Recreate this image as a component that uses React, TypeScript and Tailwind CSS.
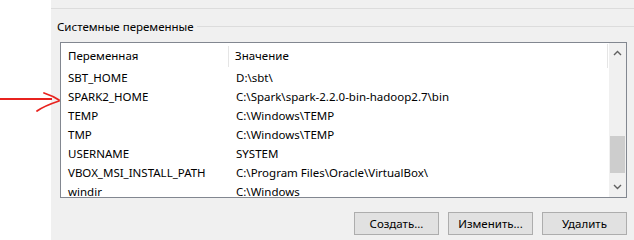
import React from "react";

const rows: [string, string][] = [
    ["SBT_HOME", "D:\\sbt\\"],
    ["SPARK2_HOME", "C:\\Spark\\spark-2.2.0-bin-hadoop2.7\\bin"],
    ["TEMP", "C:\\Windows\\TEMP"],
    ["TMP", "C:\\Windows\\TEMP"],
    ["USERNAME", "SYSTEM"],
    ["VBOX_MSI_INSTALL_PATH", "C:\\Program Files\\Oracle\\VirtualBox\\"],
    ["windir", "C:\\Windows"],
];

const font = { fontFamily: '"Noto Sans", "Open Sans", sans-serif' };

const Button = ({ label }: { label: string }) => (
    <button className="w-[85px] h-[23px] bg-[#e1e1e1] border border-[#adadad] text-[11.5px] text-black leading-none">
        {label}
    </button>
);

const App = () => {
    return (
        <div className="w-[634px] h-[240px] flex bg-white relative overflow-hidden text-black" style={font}>
            <div className="w-[51px] bg-white" />
            <div className="flex-1 flex flex-col bg-[#f0f0f0]">
                <div className="h-[9px] border-b border-[#dcdcdc]" />
                {/* group box title */}
                <div className="flex items-center h-[18px] mt-[8px]">
                    <span className="pl-[6px] pr-[3px] text-[11.5px] leading-none relative top-[1px]">Системные переменные</span>
                    <div className="flex-1 h-px bg-[#dcdcdc]" />
                </div>
                {/* list */}
                <div className="mt-[7px] ml-[9px] w-[567px] h-[156px] border border-[#828790] bg-white flex overflow-hidden">
                    <div className="flex-1 flex flex-col text-[11.5px]">
                        <div className="h-[25px] flex items-center shrink-0 pt-[1px]">
                            <div className="w-[168px] h-[21px] pl-[7px] flex items-center border-r border-[#e5e5e5]">Переменная</div>
                            <div className="flex-1 h-full pl-[6px] flex items-center border-r border-[#e5e5e5]">Значение</div>
                            <div className="w-px" />
                        </div>
                        {rows.map(([name, value]) => (
                            <div key={name} className="h-[19px] flex items-center shrink-0">
                                <div className="w-[168px] pl-[7px] whitespace-nowrap">{name}</div>
                                <div className="flex-1 pl-[7px] whitespace-nowrap">{value}</div>
                            </div>
                        ))}
                    </div>
                    {/* scrollbar */}
                    <div className="w-[17px] bg-[#f0f0f0] flex flex-col items-center">
                        <div className="h-[20px] w-full flex items-center justify-center">
                            <svg width="9" height="6" viewBox="0 0 9 6">
                                <path d="M1 5 L4.5 1.5 L8 5" fill="none" stroke="#606060" strokeWidth="1.4" />
                            </svg>
                        </div>
                        <div className="mt-[73px] w-[15px] h-[37px] bg-[#cdcdcd]" />
                        <div className="flex-1" />
                        <div className="h-[20px] w-full flex items-center justify-center">
                            <svg width="9" height="6" viewBox="0 0 9 6">
                                <path d="M1 1 L4.5 4.5 L8 1" fill="none" stroke="#606060" strokeWidth="1.4" />
                            </svg>
                        </div>
                    </div>
                </div>
                {/* buttons */}
                <div className="mt-[14px] w-[576px] flex justify-end gap-[9px]">
                    <Button label="Создать..." />
                    <Button label="Изменить..." />
                    <Button label="Удалить" />
                </div>
            </div>
            {/* red annotation arrow */}
            <svg className="absolute left-0 top-0" width="70" height="120" viewBox="0 0 70 120">
                <path d="M0 99 L52 99" stroke="#e8231f" strokeWidth="1.8" fill="none" />
                <path d="M44 93 Q53 96 59 100" stroke="#e8231f" strokeWidth="1.8" fill="none" strokeLinecap="round" />
                <path d="M37 111 Q44 106 59 101" stroke="#e8231f" strokeWidth="1.8" fill="none" strokeLinecap="round" />
            </svg>
        </div>
    );
};

export default App;
